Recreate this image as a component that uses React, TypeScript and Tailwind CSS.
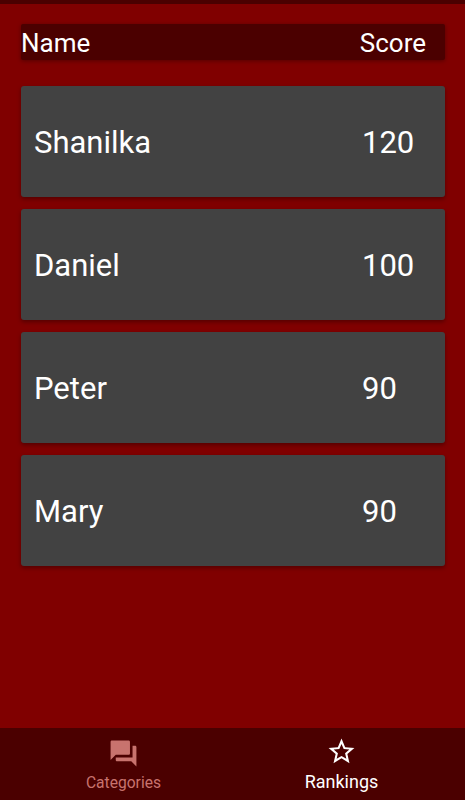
import * as React from "react";
import { MdForum, MdStarBorder } from "react-icons/md";

type Ranking = {
  name: string;
  score: number;
};

const rankings: Ranking[] = [
  { name: "Shanilka", score: 120 },
  { name: "Daniel", score: 100 },
  { name: "Peter", score: 90 },
  { name: "Mary", score: 90 },
];

export default function App() {
  return (
    <div className="flex h-screen w-full flex-col overflow-hidden bg-[#800000] font-['Roboto',sans-serif] text-white">
      <div className="h-1 shrink-0 bg-[#4b0000]" />

      <main className="flex-1 px-5 pt-5">
        <header className="ml-px flex h-9 items-center justify-between rounded-[2px] bg-[#4b0000] pt-0.5 pr-[19px] text-[26px] leading-9 shadow-[0_1px_4px_rgba(0,0,0,0.35)]">
          <span>Name</span>
          <span>Score</span>
        </header>

        <ul className="mt-[26px] space-y-3">
          {rankings.map((r) => (
            <RankingCard key={r.name} ranking={r} />
          ))}
        </ul>
      </main>

      <BottomNav />
    </div>
  );
}

function RankingCard({ ranking }: { ranking: Ranking }) {
  return (
    <li className="ml-px flex h-[111px] items-center rounded-[3px] bg-[#424242] pt-1 pl-[13px] text-[31px] shadow-[0_2px_4px_rgba(0,0,0,0.35)]">
      <span className="w-[328px]">{ranking.name}</span>
      <span>{ranking.score}</span>
    </li>
  );
}

function BottomNav() {
  return (
    <nav className="flex h-[72px] shrink-0 justify-center bg-[#4b0000]">
      <button className="flex w-[218px] flex-col items-center pt-[10px] text-[#c8736e]">
        <MdForum className="size-[31px]" />
        <span className="mt-0.5 text-[15.6px] leading-6">Categories</span>
      </button>
      <button className="flex w-[218px] flex-col items-center pt-[8px] text-white">
        <MdStarBorder className="size-[31px]" />
        <span className="mt-px text-[18px] leading-7">Rankings</span>
      </button>
    </nav>
  );
}
